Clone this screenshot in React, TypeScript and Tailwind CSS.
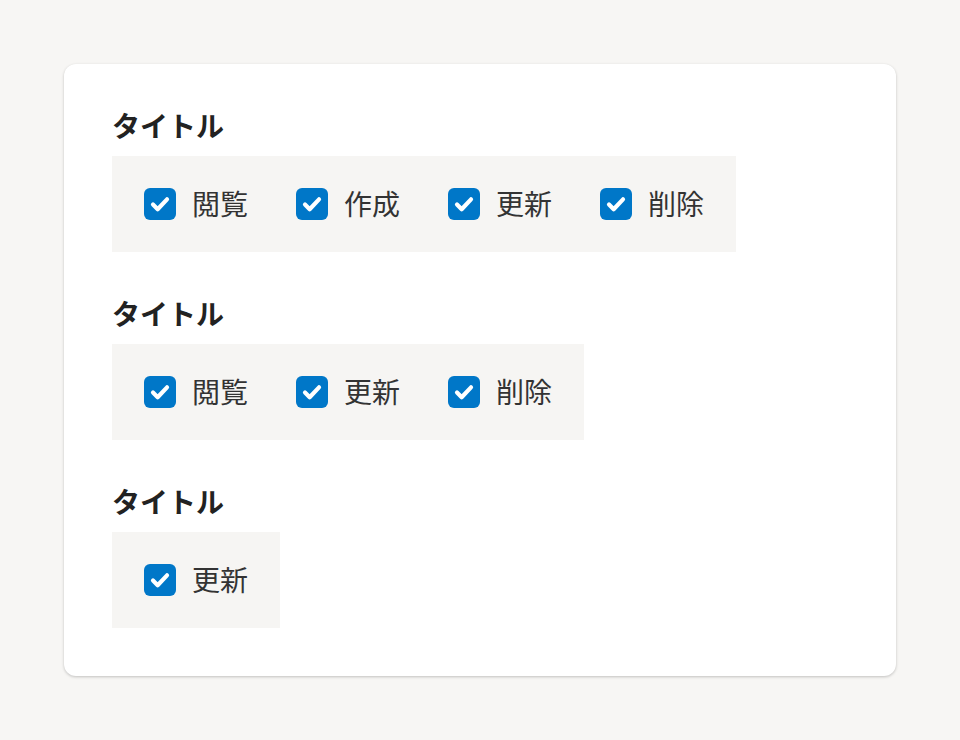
const groups = [
  ['閲覧', '作成', '更新', '削除'],
  ['閲覧', '更新', '削除'],
  ['更新'],
]

function CheckIcon() {
  return (
    <span className="flex h-8 w-8 shrink-0 items-center justify-center rounded-md bg-[#0077c8]">
      <svg viewBox="0 0 24 24" className="h-7 w-7" fill="none">
        <path
          d="M6 12.5l4 4 8-8.5"
          stroke="#fff"
          strokeWidth="3.6"
          strokeLinecap="round"
          strokeLinejoin="round"
        />
      </svg>
    </span>
  )
}

export default function App() {
  return (
    <div
      className="min-h-[740px] bg-[#f7f6f4] p-16"
      style={{ fontFamily: '"Noto Sans CJK JP", "Noto Sans", sans-serif' }}
    >
      <div className="flex flex-col gap-12 rounded-xl bg-white p-12 shadow-[0_1px_3px_rgba(0,0,0,0.22)]">
        {groups.map((items, i) => (
          <section key={i}>
            <h2 className="mb-[18px] text-[28px] font-bold leading-[26px] text-[#222]">タイトル</h2>
            <div className="inline-flex gap-12 bg-[#f6f5f3] px-8 py-8">
              {items.map((label) => (
                <label key={label} className="flex items-center gap-4">
                  <CheckIcon />
                  <span className="w-14 pb-0.5 text-[28px] leading-[30px] text-[#333]">{label}</span>
                </label>
              ))}
            </div>
          </section>
        ))}
      </div>
    </div>
  )
}
